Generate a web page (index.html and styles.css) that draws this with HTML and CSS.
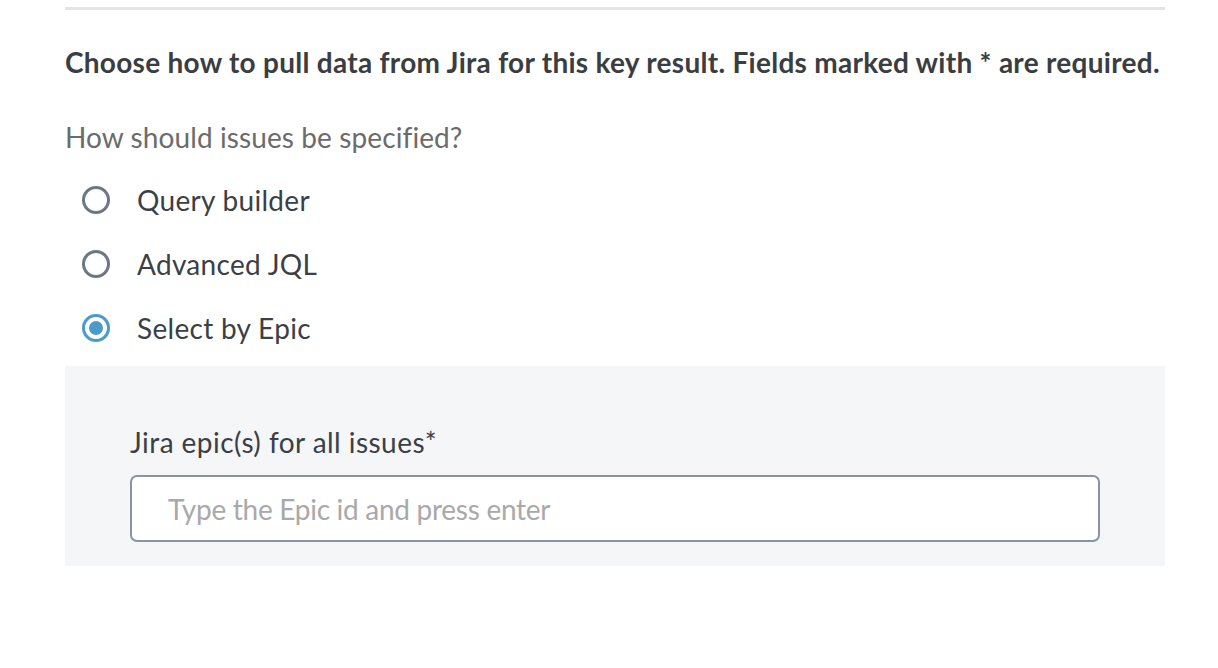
FILE: index.html
```html
<!DOCTYPE html>
<html>
<head>
<meta charset="utf-8">
<link rel="stylesheet" href="styles.css">
</head>
<body>
<div class="wrap">
  <div class="rule"></div>
  <p class="intro">Choose how to pull data from Jira for this key result. Fields marked with * are required.</p>
  <p class="question">How should issues be specified?</p>
  <div class="options">
    <label class="option"><span class="radio"></span><span class="opt-label">Query builder</span></label>
    <label class="option"><span class="radio"></span><span class="opt-label">Advanced JQL</span></label>
    <label class="option"><span class="radio checked"></span><span class="opt-label">Select by Epic</span></label>
  </div>
  <div class="panel">
    <div class="field-label">Jira epic(s) for all issues*</div>
    <div class="input"><span class="placeholder">Type the Epic id and press enter</span></div>
  </div>
</div>
</body>
</html>
```
FILE: styles.css
```css
html, body { margin: 0; padding: 0; background: #fff; }
body { font-family: Lato, "Open Sans", sans-serif; }
.wrap { width: 1100px; margin-left: 65px; }
.rule { margin-top: 7px; height: 3px; background: #e4e4e4; }
.intro { margin: 36px 0 0; font-size: 28px; line-height: 32px; font-weight: 700; color: #3a3d41; white-space: nowrap; letter-spacing: 0.28px; }
.question { margin: 43px 0 0; font-size: 28px; line-height: 32px; color: #6b6b6b; letter-spacing: 0.1px; }
.options { margin-top: 15px; display: flex; flex-direction: column; }
.option { display: flex; align-items: center; height: 64px; }
.radio { box-sizing: border-box; width: 28px; height: 28px; margin-left: 17px; border: 3px solid #6e7685; border-radius: 50%; display: flex; align-items: center; justify-content: center; }
.radio.checked { border-color: #4a9cc8; }
.radio.checked::after { content: ""; width: 14px; height: 14px; border-radius: 50%; background: #4a9cc8; }
.opt-label { margin-left: 27px; font-size: 28px; line-height: 32px; color: #3b3f46; letter-spacing: 0.3px; }
.panel { margin-top: 6px; background: #f5f6f8; padding: 60px 65px 24px; }
.field-label { font-size: 28px; line-height: 32px; color: #3b3f46; letter-spacing: 0.45px; }
.input { margin-top: 17px; box-sizing: border-box; height: 67px; background: #fff; border: 2px solid #8a93a3; border-radius: 7px; display: flex; align-items: center; padding-left: 36px; }
.placeholder { font-size: 28px; color: #a9a9a9; letter-spacing: -0.28px; }
```
